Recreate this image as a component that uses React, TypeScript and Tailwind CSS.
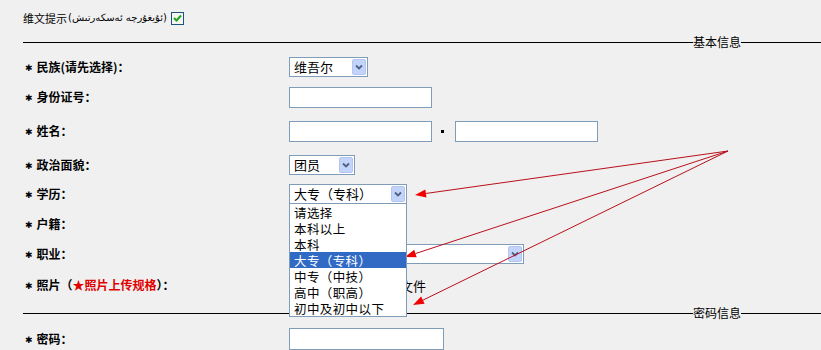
import React from 'react'

const font = { fontFamily: '"Noto Sans CJK SC", "DejaVu Sans", sans-serif' }

const Chevron = () => (
  <svg width="8" height="6" viewBox="0 0 8 6">
    <path d="M1 1.5 L4 4.5 L7 1.5" fill="none" stroke="#4d6185" strokeWidth="1.8" />
  </svg>
)

function Select({ value, className }: { value: string; className: string }) {
  return (
    <div className={`flex h-[20px] items-center border border-[#7f9db9] bg-white ${className}`}>
      <span className="flex-1 whitespace-nowrap pl-[4px] text-[13px] leading-[16px] text-black">{value}</span>
      <span className="mr-[1px] flex h-[16px] w-[14px] items-center justify-center rounded-[2px] border border-[#b4c6f0] bg-[#c3d4fb]">
        <Chevron />
      </span>
    </div>
  )
}

function Input({ className }: { className: string }) {
  return <div className={`border border-[#7f9db9] bg-white ${className}`} />
}

function Section({ title }: { title: string }) {
  return (
    <div className="flex items-center">
      <div className="h-px flex-1 bg-black" />
      <span className="text-[12px] leading-none text-black">{title}</span>
      <div className="h-px w-[80px] bg-black" />
    </div>
  )
}

function Label({ children }: { children: React.ReactNode }) {
  return (
    <div className="flex w-[266px] items-center pl-[2px] text-[12px] font-bold leading-none text-black">
      <span className="mr-[4px] text-[9px]">✱</span>
      {children}
    </div>
  )
}

const levels = ['请选择', '本科以上', '本科', '大专（专科）', '中专（中技）', '高中（职高）', '初中及初中以下']

// arrows from one point to the three spots in the dropdown
const origin = [728, 151]
const tips = [
  [415, 195],
  [405, 257],
  [413, 305],
]

function Arrows() {
  return (
    <svg className="pointer-events-none absolute left-0 top-0" width="821" height="350">
      {tips.map(([tx, ty], i) => {
        const dx = tx - origin[0]
        const dy = ty - origin[1]
        const len = Math.hypot(dx, dy)
        const ux = dx / len
        const uy = dy / len
        const bx = tx - ux * 11
        const by = ty - uy * 11
        const nx = -uy * 4
        const ny = ux * 4
        return (
          <g key={i}>
            <line x1={origin[0]} y1={origin[1]} x2={bx} y2={by} stroke="#b8101a" strokeWidth="1" />
            <polygon points={`${tx},${ty} ${bx + nx},${by + ny} ${bx - nx},${by - ny}`} fill="#f00000" />
          </g>
        )
      })}
    </svg>
  )
}

export default function App() {
  return (
    <div className="relative h-[350px] w-[821px] overflow-hidden bg-[#f0f0f0] pl-[23px] pt-[8px] text-black" style={font}>
      <div className="flex h-[20px] items-center">
        <span className="text-[11px] leading-none">维文提示</span>
        <span className="ml-[1px] text-[10px] leading-none" style={{ fontFamily: '"DejaVu Sans", sans-serif' }}>
          (ئۇيغۇرچە ئەسكەرتىش)
        </span>
        <span className="ml-[4px] flex h-[13px] w-[13px] items-center justify-center border border-[#1c5180] bg-[#f4f4f0]">
          <svg width="9" height="8" viewBox="0 0 9 8">
            <path d="M1 4 L3.5 6.5 L8 1.5" fill="none" stroke="#21a121" strokeWidth="2" />
          </svg>
        </span>
      </div>

      <div className="mt-[4px] flex h-[20px] flex-col justify-center">
        <Section title="基本信息" />
      </div>

      <div className="flex h-[30px] items-center">
        <Label>民族(请先选择)：</Label>
        <Select value="维吾尔" className="w-[79px]" />
      </div>

      <div className="flex h-[30px] items-center">
        <Label>身份证号：</Label>
        <Input className="h-[21px] w-[143px]" />
      </div>

      <div className="flex h-[38px] items-center">
        <Label>姓名：</Label>
        <Input className="h-[21px] w-[143px]" />
        <span className="ml-[9px] mr-[11px] h-[3px] w-[3px] bg-black" />
        <Input className="h-[21px] w-[143px]" />
      </div>

      <div className="flex h-[30px] items-center">
        <Label>政治面貌：</Label>
        <Select value="团员" className="w-[66px]" />
      </div>

      <div className="relative z-10 flex h-[28px] items-center">
        <Label>学历：</Label>
        <div className="relative">
          <Select value="大专（专科）" className="w-[118px]" />
          <div className="absolute left-0 top-[19px] w-[118px] border border-[#7f9db9] bg-white">
            {levels.map((l) => (
              <div
                key={l}
                className={`flex h-[16px] items-center overflow-hidden whitespace-nowrap pl-[4px] ${
                  l === '大专（专科）' ? 'bg-[#316ac5] text-white' : 'text-black'
                }`}
              >
                <span className="text-[12.5px] leading-[15px] tracking-[0.4px]">{l}</span>
              </div>
            ))}
          </div>
        </div>
      </div>

      <div className="flex h-[32px] items-center">
        <Label>户籍：</Label>
      </div>

      <div className="flex h-[28px] items-center">
        <Label>职业：</Label>
        <Select value="" className="w-[235px]" />
      </div>

      <div className="flex h-[34px] items-center">
        <Label>
          照片（<span className="text-[#e00000]">★照片上传规格</span>）：
        </Label>
        <span className="pl-[85px] text-[13px] leading-none">选择文件</span>
      </div>

      <div className="flex h-[22px] flex-col justify-center">
        <Section title="密码信息" />
      </div>

      <div className="flex h-[30px] items-center">
        <Label>密码：</Label>
        <Input className="h-[22px] w-[155px]" />
      </div>

      <Arrows />
    </div>
  )
}
